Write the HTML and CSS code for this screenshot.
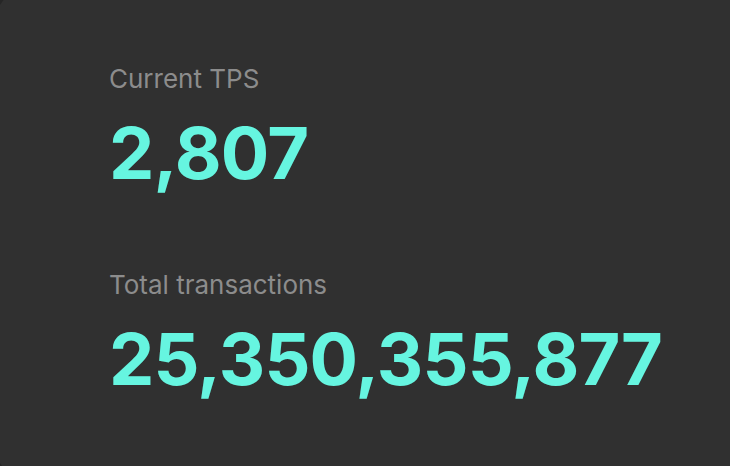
FILE: index.html
```html
<!DOCTYPE html>
<html lang="en">
<head>
  <meta charset="UTF-8" />
  <meta name="viewport" content="width=device-width, initial-scale=1" />
  <title>Network stats</title>
  <link rel="stylesheet" href="styles.css">
</head>
<body>

<div class="card">
  <div class="stat">
    <div class="stat-label">Current TPS</div>
    <div class="stat-value">2,807</div>
  </div>
  <div class="stat">
    <div class="stat-label">Total transactions</div>
    <div class="stat-value">25,350,355,877</div>
  </div>
</div>

</body>
</html>
```

FILE: styles.css
```css
html, body {
  margin: 0;
  height: 100%;
  background: #262626;
  overflow: hidden;
}
body {
  font-family: 'Inter', 'Noto Sans', sans-serif;
}
.card {
  background: #303030;
  border-radius: 40px;
  margin: -14px -60px 0 -6px;
  height: calc(100% + 30px);
  padding: 77px 0 0 115px;
  box-sizing: border-box;
  display: flex;
  flex-direction: column;
  gap: 72px;
}
.stat {
  display: flex;
  flex-direction: column;
  gap: 14px;
}
.stat-label {
  color: #8c8c8c;
  font-size: 26px;
  line-height: 32px;
  white-space: nowrap;
}
.stat-value {
  color: #66f5e0;
  font-size: 72px;
  font-weight: 700;
  line-height: 88px;
  letter-spacing: -0.8px;
  white-space: nowrap;
}
```
